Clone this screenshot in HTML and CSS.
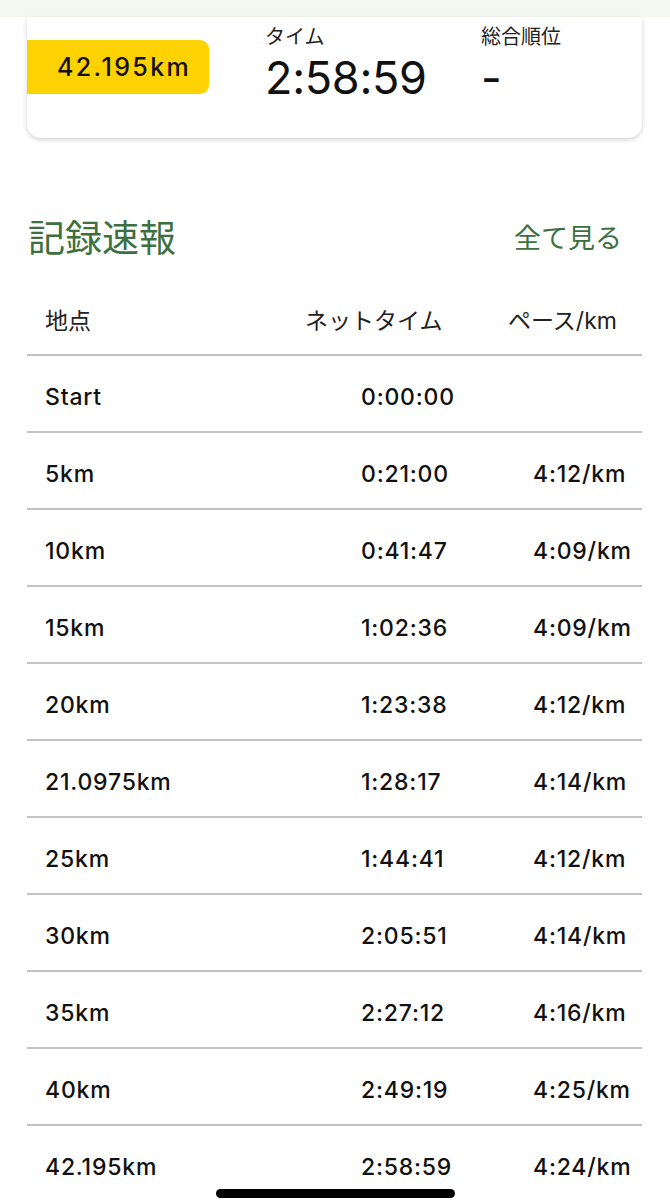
FILE: index.html
```html
<!DOCTYPE html>
<html lang="ja">
<head>
    <meta charset="UTF-8">
    <meta name="viewport" content="width=device-width, initial-scale=1.0">
    <title>記録速報</title>
    <link rel="stylesheet" href="styles.css">
</head>
<body>
    <div class="top-strip"></div>
    <div class="result-card">
        <div class="distance-badge">42.195km</div>
        <div class="result-col time-col">
            <div class="result-label">タイム</div>
            <div class="result-value">2:58:59</div>
        </div>
        <div class="result-col">
            <div class="result-label">総合順位</div>
            <div class="result-value">-</div>
        </div>
    </div>

    <div class="section-head">
        <h2>記録速報</h2>
        <a href="#" class="see-all">全て見る</a>
    </div>

    <div class="splits">
        <div class="split-head">
            <span>地点</span>
            <span>ネットタイム</span>
            <span>ペース/km</span>
        </div>
        <div class="split-row"><span>Start</span><span>0:00:00</span><span></span></div>
        <div class="split-row"><span>5km</span><span>0:21:00</span><span>4:12/km</span></div>
        <div class="split-row"><span>10km</span><span>0:41:47</span><span>4:09/km</span></div>
        <div class="split-row"><span>15km</span><span>1:02:36</span><span>4:09/km</span></div>
        <div class="split-row"><span>20km</span><span>1:23:38</span><span>4:12/km</span></div>
        <div class="split-row"><span>21.0975km</span><span>1:28:17</span><span>4:14/km</span></div>
        <div class="split-row"><span>25km</span><span>1:44:41</span><span>4:12/km</span></div>
        <div class="split-row"><span>30km</span><span>2:05:51</span><span>4:14/km</span></div>
        <div class="split-row"><span>35km</span><span>2:27:12</span><span>4:16/km</span></div>
        <div class="split-row"><span>40km</span><span>2:49:19</span><span>4:25/km</span></div>
        <div class="split-row"><span>42.195km</span><span>2:58:59</span><span>4:24/km</span></div>
    </div>

    <div class="home-indicator"></div>
</body>
</html>
```

FILE: styles.css
```css
body {
    margin: 0;
    padding: 0;
    background-color: #fff;
    color: #111;
    font-family: Inter, "Noto Sans CJK JP", sans-serif;
    overflow: hidden;
}
.top-strip {
    height: 17px;
    background-color: #f5f8f0;
}
.result-card {
    display: flex;
    align-items: flex-start;
    height: 121px;
    margin: 0 28px 0 27px;
    background-color: #fff;
    border-radius: 0 0 14px 14px;
    box-shadow: 0 2px 5px rgba(0, 0, 0, 0.18);
}
.distance-badge {
    width: 152px;
    height: 54px;
    margin-top: 23px;
    padding-left: 30px;
    line-height: 54px;
    background-color: #fdd203;
    border-radius: 0 9px 9px 0;
    font-size: 25px;
    font-weight: 500;
    letter-spacing: 2.4px;
    color: #111;
}
.result-col {
    padding-top: 7px;
}
.time-col {
    width: 216px;
    margin-left: 56px;
}
.result-label {
    font-size: 20px;
    line-height: 26px;
    color: #222;
}
.result-value {
    margin-top: 2px;
    font-size: 45px;
    line-height: 52px;
    font-weight: 400;
    letter-spacing: -0.3px;
}
.section-head {
    display: flex;
    justify-content: space-between;
    align-items: center;
    margin: 73px 48px 0 28px;
    height: 50px;
}
.section-head h2 {
    margin: 0;
    font-size: 37px;
    font-weight: 400;
    color: #3e6f3f;
}
.see-all {
    font-size: 27px;
    color: #3e6f3f;
    text-decoration: none;
}
.splits {
    margin: 0 28px 0 27px;
}
.split-head, .split-row {
    display: grid;
    padding-left: 18px;
    border-bottom: 2px solid #c2c2c2;
    line-height: 25px;
}
.split-head {
    grid-template-columns: 260px 203px 1fr;
    padding-top: 48px;
    padding-bottom: 20px;
    font-size: 23px;
    color: #222;
}
.split-row {
    grid-template-columns: 316px 172px 1fr;
    padding-top: 29px;
    padding-bottom: 21px;
    font-size: 23px;
    font-weight: 500;
    letter-spacing: 0.8px;
}
.home-indicator {
    position: fixed;
    left: 216px;
    bottom: 2px;
    width: 239px;
    height: 9px;
    border-radius: 5px;
    background-color: #000;
}
```
